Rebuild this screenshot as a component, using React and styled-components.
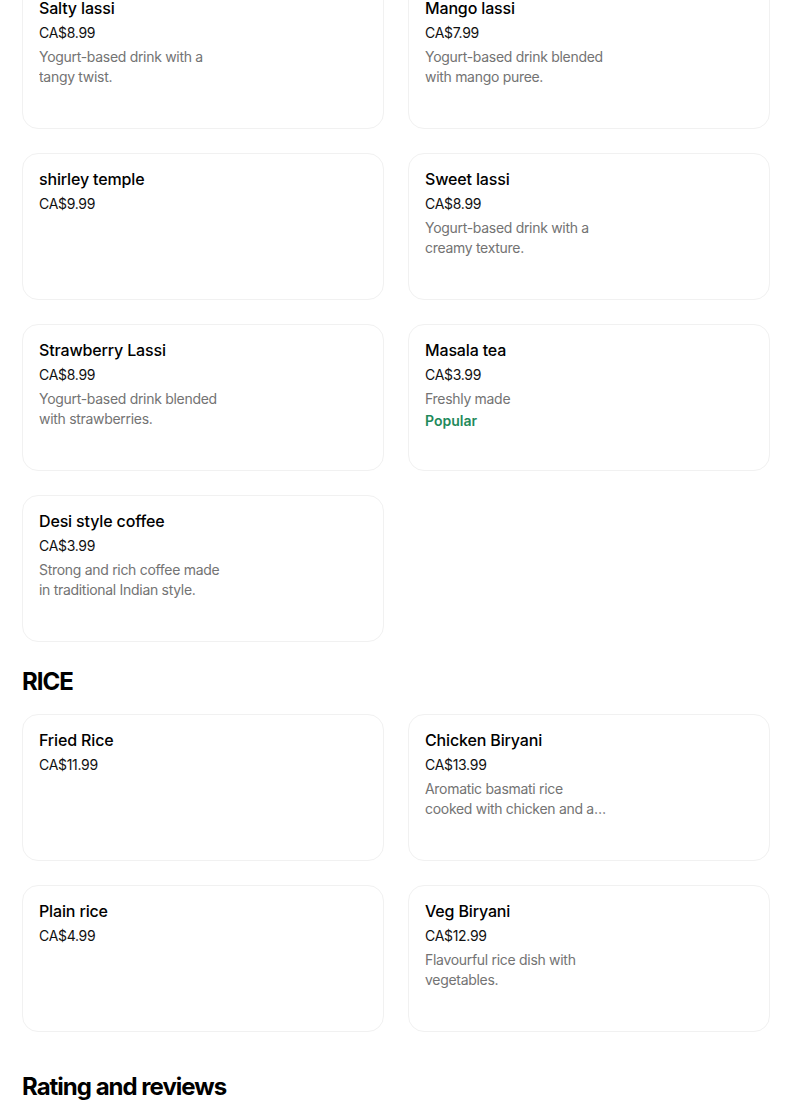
import React from "react";
import styled, { createGlobalStyle } from "styled-components";

const Global = createGlobalStyle`
  html, body { margin: 0; padding: 0; background: #fff; }
  body { font-family: Inter, "Noto Sans", sans-serif; color: #000; overflow: hidden; }
`;

const Page = styled.div`
  width: 748px;
  margin: -18px 0 0 22px;
`;

const Grid = styled.div`
  display: grid;
  grid-template-columns: 1fr 1fr;
  gap: 24px;
`;

const Card = styled.div`
  box-sizing: border-box;
  height: 147px;
  border: 1px solid #f1f1f1;
  border-radius: 16px;
  padding: 15px 16px 16px;
  display: flex;
  flex-direction: column;
  background: #fff;
`;

const Title = styled.div`
  font-size: 16px;
  line-height: 20px;
  font-weight: 500;
  color: #000;
  letter-spacing: -0.15px;
`;

const Price = styled.div`
  margin-top: 5px;
  font-size: 14px;
  line-height: 20px;
  color: #111;
  letter-spacing: -0.3px;
`;

const Desc = styled.div`
  margin-top: 4px;
  max-width: 186px;
  font-size: 14px;
  line-height: 20px;
  color: #737373;
  letter-spacing: -0.3px;
  display: -webkit-box;
  -webkit-line-clamp: 2;
  -webkit-box-orient: vertical;
  overflow: hidden;
`;

const Badge = styled.div`
  margin-top: 2px;
  font-size: 14px;
  line-height: 20px;
  font-weight: 600;
  color: #1f8a5b;
`;

const Heading = styled.h2`
  margin: ${(p) => p.$mt || 24}px 0 16px;
  font-size: 24px;
  line-height: 32px;
  font-weight: 700;
  letter-spacing: -1px;
`;

const drinks = [
  { t: "Salty lassi", p: "CA$8.99", d: "Yogurt-based drink with a tangy twist." },
  { t: "Mango lassi", p: "CA$7.99", d: "Yogurt-based drink blended with mango puree." },
  { t: "shirley temple", p: "CA$9.99" },
  { t: "Sweet lassi", p: "CA$8.99", d: "Yogurt-based drink with a creamy texture." },
  { t: "Strawberry Lassi", p: "CA$8.99", d: "Yogurt-based drink blended with strawberries." },
  { t: "Masala tea", p: "CA$3.99", d: "Freshly made", b: "Popular" },
  { t: "Desi style coffee", p: "CA$3.99", d: "Strong and rich coffee made in traditional Indian style." },
];

const rice = [
  { t: "Fried Rice", p: "CA$11.99" },
  { t: "Chicken Biryani", p: "CA$13.99", d: "Aromatic basmati rice cooked with chicken and a blend of spices." },
  { t: "Plain rice", p: "CA$4.99" },
  { t: "Veg Biryani", p: "CA$12.99", d: "Flavourful rice dish with vegetables." },
];

const Item = ({ t, p, d, b }) => (
  <Card>
    <Title>{t}</Title>
    <Price>{p}</Price>
    {d && <Desc>{d}</Desc>}
    {b && <Badge>{b}</Badge>}
  </Card>
);

export default function App() {
  return (
    <>
      <Global />
      <Page>
        <Grid>
          {drinks.map((x) => (
            <Item key={x.t} {...x} />
          ))}
        </Grid>
        <Heading>RICE</Heading>
        <Grid>
          {rice.map((x) => (
            <Item key={x.t} {...x} />
          ))}
        </Grid>
        <Heading $mt={39}>Rating and reviews</Heading>
      </Page>
    </>
  );
}
